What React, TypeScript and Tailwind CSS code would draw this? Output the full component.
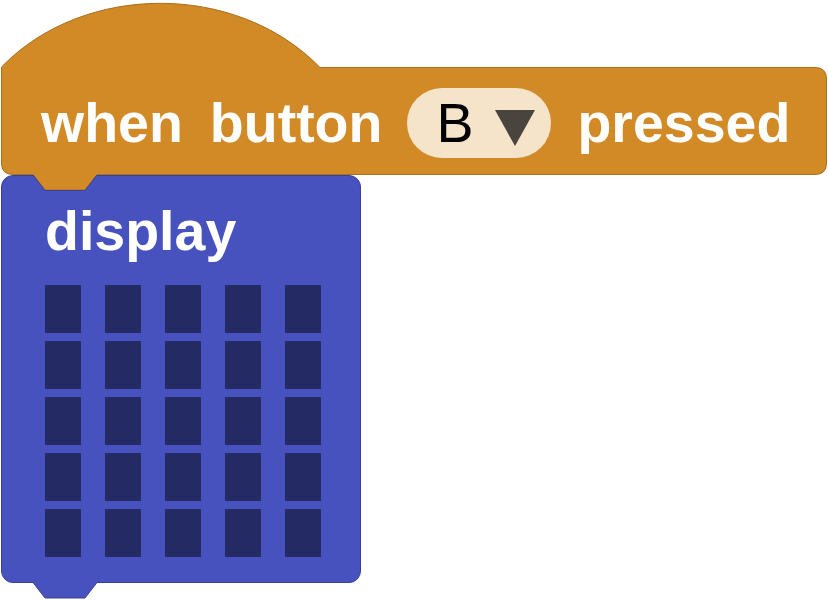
const rows = [0, 1, 2, 3, 4];
const cols = [0, 1, 2, 3, 4];

function HatShape() {
    return (
        <svg
            className="absolute left-0 top-0 overflow-visible"
            width={828}
            height={192}
            viewBox="0 0 828 192"
        >
            <path
                d="M1.5 67 C84 -18 237 -18 320 67.5 H815 Q826.5 67.5 826.5 79 V163 Q826.5 174.5 815 174.5 H97 L85 190 H45 L33 174.5 H13 Q1.5 174.5 1.5 163 Z"
                fill="#d18a26"
                stroke="#a8701f"
                strokeWidth={1}
            />
            <path d="M33 175 L45 190.5 H85 L97 175" fill="none" stroke="#3a4096" strokeWidth={1} />
        </svg>
    );
}

function Dropdown() {
    return (
        <div className="flex h-[70px] w-[144px] items-center rounded-full bg-[#f5e3ca] pl-[29px]">
            <span className="font-normal text-[55.5px] leading-[56px] text-black">B</span>
            <svg className="ml-[22px] mt-[10px]" width={40} height={36} viewBox="0 0 40 36">
                <path d="M0 0 H40 L20 36 Z" fill="#4a443e" />
            </svg>
        </div>
    );
}

export default function App() {
    return (
        <div
            className="w-[828px] h-[600px] bg-white overflow-hidden"
            style={{ fontFamily: '"Liberation Sans", Arial, sans-serif' }}
        >
            {/* when button B pressed */}
            <div className="relative z-10 h-[175px] w-[828px]">
                <HatShape />
                <div className="relative flex items-center pt-[88px] pl-[41px] font-bold text-white text-[55.5px] leading-[56px]">
                    <span>when</span>
                    <span className="ml-[27px]">button</span>
                    <div className="ml-[25px]">
                        <Dropdown />
                    </div>
                    <span className="ml-[26px]">pressed</span>
                </div>
            </div>

            {/* display block */}
            <div className="relative ml-[1px] h-[408px] w-[360px] rounded-[12px] border border-[#3a4096] bg-[#4852be] pl-[43px] pt-[27px]">
                <div className="font-bold text-white text-[55.5px] leading-[56px]">display</div>
                <div className="mt-[26px] grid grid-cols-[repeat(5,36px)] gap-x-[24px] gap-y-[8px]">
                    {rows.map((r) =>
                        cols.map((c) => <div key={`${r}-${c}`} className="h-[48px] w-[36px] bg-[#242a64]" />)
                    )}
                </div>
                <svg className="absolute left-[31px] top-[calc(100%-1px)] overflow-visible" width={64} height={18} viewBox="0 0 64 18">
                    <path d="M0 0 H64 V1.5 L52 17 H12 L0 1.5 Z" fill="#4852be" />
                    <path d="M0 1.5 L12 17 H52 L64 1.5" fill="none" stroke="#3a4096" strokeWidth={1} />
                </svg>
            </div>
        </div>
    );
}
